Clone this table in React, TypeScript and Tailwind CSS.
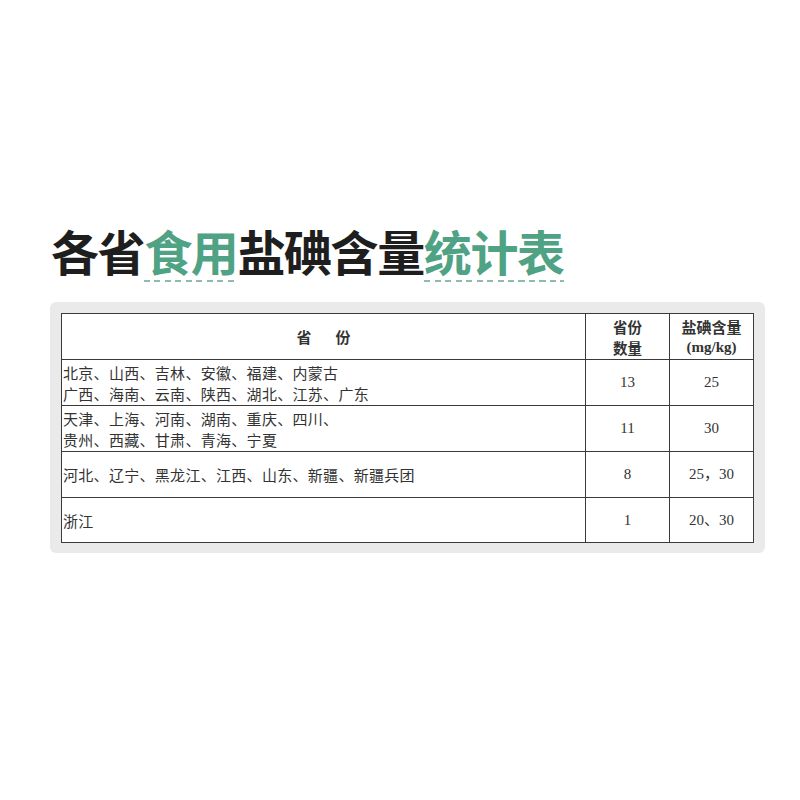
import React from "react";

const cjk = { fontFamily: '"Noto Sans CJK SC", "Noto Sans", sans-serif' };
const serif = { fontFamily: '"Liberation Serif", "Noto Sans CJK SC", serif' };

const rows: { lines: string[]; count: string; iodine: string; h: string }[] = [
  { lines: ["北京、山西、吉林、安徽、福建、内蒙古", "广西、海南、云南、陕西、湖北、江苏、广东"], count: "13", iodine: "25", h: "h-[46px]" },
  { lines: ["天津、上海、河南、湖南、重庆、四川、", "贵州、西藏、甘肃、青海、宁夏"], count: "11", iodine: "30", h: "h-[46px]" },
  { lines: ["河北、辽宁、黑龙江、江西、山东、新疆、新疆兵团"], count: "8", iodine: "25，30", h: "h-[46px]" },
  { lines: ["浙江"], count: "1", iodine: "20、30", h: "h-[45px]" },
];

function Dashed() {
  return (
    <div className="mt-[6px] h-[2px] w-full bg-[repeating-linear-gradient(to_right,#8dbcae_0px,#8dbcae_6px,transparent_6px,transparent_10.5px)]" />
  );
}

export default function App() {
  return (
    <div className="min-h-[800px] w-[800px] bg-white" style={cjk}>
      <div className="pt-[226px]">
        <h1 className="ml-[51px] flex items-start text-[48px] font-bold leading-[48px] tracking-[-1.4px] text-[#1e1e1e]">
          <span>各省</span>
          <span className="flex flex-col text-[#4fa283]">
            <span>食用</span>
            <Dashed />
          </span>
          <span>盐碘含量</span>
          <span className="flex flex-col text-[#4fa283]">
            <span>统计表</span>
            <Dashed />
          </span>
        </h1>
        <div className="ml-[50px] mt-[20px] w-[715px] rounded-[6px] bg-[#eaeaea] pb-[10px] pl-[11px] pr-[12px] pt-[11px]">
          <table className="w-[692px] table-fixed border-collapse bg-white text-[#333]">
            <colgroup>
              <col className="w-[524px]" />
              <col className="w-[84px]" />
              <col className="w-[84px]" />
            </colgroup>
            <thead>
              <tr className="h-[46px]">
                <th className="border-[1.5px] border-[#3a3a3a] p-0 align-middle">
                  <div className="flex justify-center gap-[24px] text-[15px] font-bold leading-[21px]">
                    <span>省</span>
                    <span>份</span>
                  </div>
                </th>
                <th className="border-[1.5px] border-[#3a3a3a] p-0 align-middle text-[14.5px] font-bold leading-[21px]">
                  <div>省份</div>
                  <div>数量</div>
                </th>
                <th className="border-[1.5px] border-[#3a3a3a] p-0 align-middle text-[15px] font-bold leading-[21px]">
                  <div>盐碘含量</div>
                  <div style={serif}>(mg/kg)</div>
                </th>
              </tr>
            </thead>
            <tbody>
              {rows.map((r, i) => (
                <tr key={i} className={r.h}>
                  <td className="border-[1.5px] border-[#3a3a3a] p-0 pl-[1px] align-middle text-[15px] leading-[21px] tracking-[0.3px]">
                    {r.lines.map((l, j) => (
                      <div key={j}>{l}</div>
                    ))}
                  </td>
                  <td className="border-[1.5px] border-[#3a3a3a] p-0 text-center align-middle text-[15px]" style={serif}>
                    {r.count}
                  </td>
                  <td className="border-[1.5px] border-[#3a3a3a] p-0 text-center align-middle text-[15px]" style={serif}>
                    {r.iodine}
                  </td>
                </tr>
              ))}
            </tbody>
          </table>
        </div>
      </div>
    </div>
  );
}
